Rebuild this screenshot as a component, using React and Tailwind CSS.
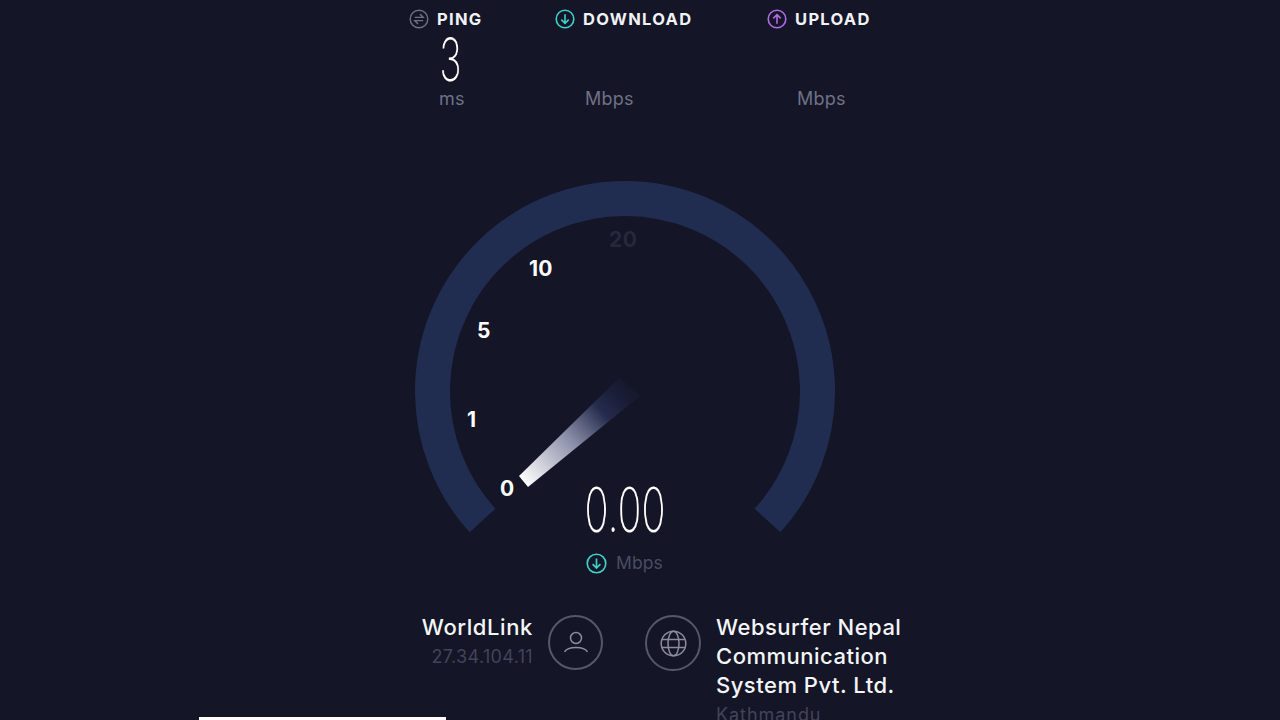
import React from 'react';

const sans = "font-['Inter',sans-serif]";

function PingIcon() {
  return (
    <svg width="20" height="20" viewBox="0 0 20 20" fill="none" stroke="#6e7086" strokeWidth="1.400">
      <circle cx="10" cy="10" r="8.800" />
      <path d="M5.800 8.400h8.400L11 5" />
      <path d="M14.200 11.600H5.800L9 15" />
    </svg>
  );
}

function DownIcon({ size = 20 }) {
  return (
    <svg width={size} height={size} viewBox="0 0 20 20" fill="none" stroke="#3fd0c9" strokeWidth="1.600">
      <circle cx="10" cy="10" r="8.800" />
      <path d="M10 5.200v9M6.300 10.600l3.700 3.700 3.700-3.700" />
    </svg>
  );
}

function UpIcon() {
  return (
    <svg width="20" height="20" viewBox="0 0 20 20" fill="none" stroke="#b06be6" strokeWidth="1.600">
      <circle cx="10" cy="10" r="8.800" />
      <path d="M10 14.800v-9M6.300 9.400L10 5.700l3.700 3.700" />
    </svg>
  );
}

function Stat({ icon, label, value, unit, width }) {
  return (
    <div className={`flex flex-col ${width}`}>
      <div className="flex items-center gap-2 h-5 mt-[9px]">
        {icon}
        <span className="text-[16.500px] font-bold text-[#f1f2f6] tracking-[1.300px] leading-none">{label}</span>
      </div>
      <div className="h-[50px] pl-[49px] mt-[5px] text-[60px] font-extralight leading-[50px] text-white origin-left scale-x-[0.62] will-change-transform">{value}</div>
      <div className="pl-[30px] mt-[3px] text-[18px] tracking-[0.250px] leading-6 text-[#6f7187]">{unit}</div>
    </div>
  );
}

function Gauge() {
  return (
    <svg width="420" height="360" viewBox="0 0 420 360" fill="none">
      <defs>
        <linearGradient id="needle" gradientUnits="userSpaceOnUse" x1="108" y1="302" x2="220" y2="200">
          <stop offset="0" stopColor="#ffffff" />
          <stop offset="0.42" stopColor="#8b8ea8" />
          <stop offset="0.7" stopColor="#242b4c" />
          <stop offset="0.85" stopColor="#1a1d37" />
          <stop offset="1" stopColor="#141526" />
        </linearGradient>
      </defs>
      <path d="M67.500 340.500A192.500 192.500 0 1 1 352.500 340.500" stroke="#212d50" strokeWidth="35" />
      <path d="M104 296L113 307L225 216L205 197Z" fill="url(#needle)" />
    </svg>
  );
}

export default function App() {
  return (
    <div className={`relative h-[720px] w-full overflow-hidden bg-[#141526] ${sans}`}>
      {/* Results */}
      <div className="flex pl-[409px]">
        <Stat width="w-[146px]" icon={<PingIcon />} label="PING" value="3" unit="ms" />
        <Stat width="w-[212px]" icon={<DownIcon />} label="DOWNLOAD" value="" unit="Mbps" />
        <Stat width="w-[130px]" icon={<UpIcon />} label="UPLOAD" value="" unit="Mbps" />
      </div>

      {/* Dial */}
      <div className="relative ml-[415px] mt-[69px] w-[420px] h-[434px]">
        <Gauge />
        <span className="absolute left-[194px] top-[48px] text-[21px] tracking-[0.500px] font-bold leading-6 text-[#26283c]">20</span>
        <span className="absolute left-[114px] top-[77px] text-[21px] tracking-[0.300px] font-bold leading-6 text-white">10</span>
        <span className="absolute left-[62px] top-[139px] text-[21px] font-bold leading-6 text-white">5</span>
        <span className="absolute left-[52px] top-[228px] text-[21px] font-bold leading-6 text-white">1</span>
        <span className="absolute left-[85px] top-[297px] text-[21px] font-bold leading-6 text-white">0</span>
        <div className="absolute left-[110px] top-[300px] w-[200px] text-center text-[62px] font-extralight leading-[60px] text-white scale-x-[0.64] will-change-transform">0.00</div>
        <div className="absolute left-[171px] top-[371px] flex items-center gap-[9px]">
          <DownIcon size={21} />
          <span className="text-[17.500px] tracking-[0.100px] leading-6 text-[#4a4c62]">Mbps</span>
        </div>
      </div>

      {/* Client and server */}
      <div className="flex items-start pl-[420px] -mt-[1px]">
        <div className="w-[113px] text-right">
          <div className="text-[22px] font-medium tracking-[0.600px] leading-[29px] text-[#f4f5f8] whitespace-nowrap">WorldLink</div>
          <div className="text-[18px] tracking-[0.350px] leading-[29px] text-[#42445a]">27.34.104.11</div>
        </div>
        <div className="ml-[15px] mt-[2px] flex h-[55px] w-[55px] items-center justify-center rounded-full border-2 border-[#55576b]">
          <svg width="26" height="26" viewBox="0 0 26 26" fill="none" stroke="#8b8d9e" strokeWidth="1.500">
            <circle cx="13" cy="8" r="5.500" />
            <path d="M1.500 22c2-3.500 6-4.500 11.500-4.500S22.500 18.500 24.500 22" />
          </svg>
        </div>
        <div className="ml-[42px] mt-[2px] flex h-[56px] w-[56px] items-center justify-center rounded-full border-2 border-[#55576b]">
          <svg width="27" height="27" viewBox="0 0 27 27" fill="none" stroke="#8b8d9e" strokeWidth="1.500">
            <circle cx="13.500" cy="13.500" r="12.300" />
            <ellipse cx="13.500" cy="13.500" rx="5.500" ry="12.300" />
            <path d="M2 9.500h23M2 17.500h23" />
          </svg>
        </div>
        <div className="ml-[15px] w-[200px]">
          <div className="text-[22px] font-medium tracking-[0.500px] leading-[29px] text-[#f4f5f8]">Websurfer Nepal Communication System Pvt. Ltd.</div>
          <div className="text-[18px] tracking-[0.950px] leading-[29px] text-[#42445a]">Kathmandu</div>
        </div>
      </div>

      <div className="absolute bottom-0 left-[199px] h-[3px] w-[247px] bg-white" />
    </div>
  );
}
